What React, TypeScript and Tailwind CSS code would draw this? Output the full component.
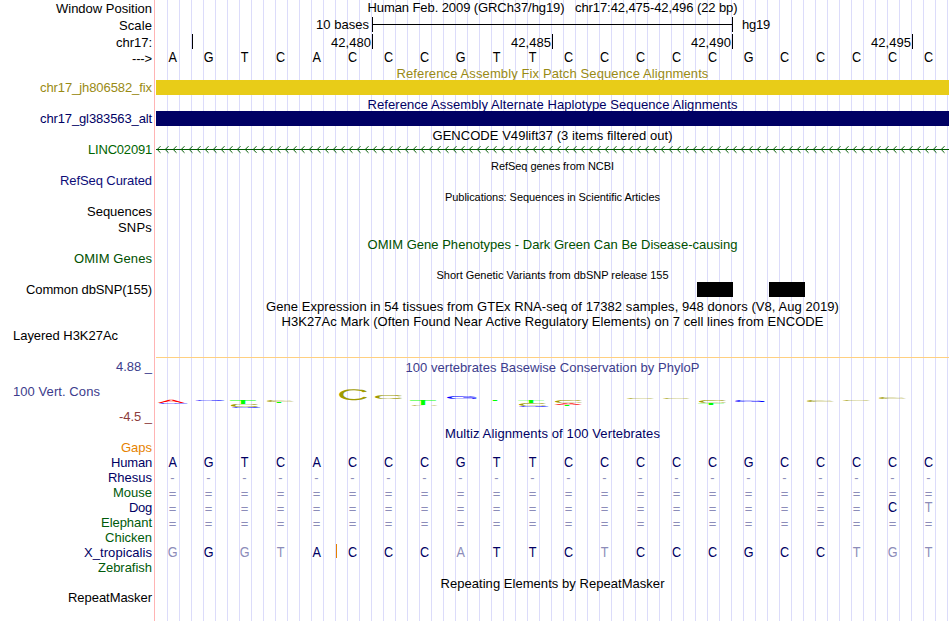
import { useLayoutEffect, useRef, useState } from "react";
import type { ReactNode } from "react";

/** One line of text whose letter spacing is adjusted to fill a given width. */
function Fit({ text, width, className = "" }: { text: string; width: number; className?: string }) {
  const ref = useRef<HTMLSpanElement>(null);
  const [spacing, setSpacing] = useState(0);
  useLayoutEffect(() => {
    if (ref.current) {
      const natural = ref.current.getBoundingClientRect().width;
      setSpacing((s) => s + (width - natural) / text.length);
    }
  }, [text, width]);
  return (
    <span ref={ref} className={`inline-block whitespace-pre ${className}`} style={{ letterSpacing: `${spacing}px` }}>
      {text}
    </span>
  );
}

type LabelRow = { text: string; w: number; h: string; color: string; left?: boolean };

const NAVY = "text-[#000064]";
const GREEN = "text-[#005a0a]";

const labels: LabelRow[] = [
  { text: "Window Position", w: 96, h: "h-[17px]", color: "text-black" },
  { text: "Scale", w: 33, h: "h-[17px]", color: "text-black" },
  { text: "chr17:", w: 36, h: "h-4", color: "text-black" },
  { text: "--->", w: 20, h: "h-[29px]", color: "text-black" },
  { text: "chr17_jh806582_fix", w: 112, h: "h-[31px]", color: "text-[#998a14]" },
  { text: "chr17_gl383563_alt", w: 112, h: "h-[31px]", color: NAVY },
  { text: "LINC02091", w: 64, h: "h-[31px]", color: "text-[#006400]" },
  { text: "RefSeq Curated", w: 92, h: "h-[31px]", color: "text-[#0c0c78]" },
  { text: "Sequences", w: 65, h: "h-4", color: "text-black" },
  { text: "SNPs", w: 34, h: "h-[31px]", color: "text-black" },
  { text: "OMIM Genes", w: 78, h: "h-[31px]", color: "text-[#005000]" },
  { text: "Common dbSNP(155)", w: 126, h: "h-[46px]", color: "text-black" },
  { text: "Layered H3K27Ac", w: 105, h: "h-[31px]", color: "text-black", left: true },
  { text: "4.88 _", w: 36, h: "h-[25px]", color: "text-[#3c3c8c]" },
  { text: "100 Vert. Cons", w: 87, h: "h-[25px]", color: "text-[#3c3c8c]", left: true },
  { text: "-4.5 _", w: 33, h: "h-[31px]", color: "text-[#8c3c3c]" },
  { text: "Gaps", w: 31, h: "h-[15px]", color: "text-[#e68200]" },
  { text: "Human", w: 41, h: "h-[15px]", color: NAVY },
  { text: "Rhesus", w: 44, h: "h-[15px]", color: NAVY },
  { text: "Mouse", w: 39, h: "h-[15px]", color: GREEN },
  { text: "Dog", w: 23, h: "h-[15px]", color: NAVY },
  { text: "Elephant", w: 51, h: "h-[15px]", color: GREEN },
  { text: "Chicken", w: 47, h: "h-[15px]", color: GREEN },
  { text: "X_tropicalis", w: 68, h: "h-[15px]", color: NAVY },
  { text: "Zebrafish", w: 54, h: "h-[30px]", color: GREEN },
  { text: "RepeatMasker", w: 84, h: "h-[15px]", color: "text-black" },
];

function Title({ text, w, className = "" }: { text: string; w: number; className?: string }) {
  return (
    <div className={`flex justify-center ${className}`}>
      <Fit text={text} width={w} />
    </div>
  );
}

/** One character per base; lower-case marks a base that differs from human. */
function Bases({ seq, className = "" }: { seq: string; className?: string }) {
  return (
    <div className={`flex ${className}`}>
      {seq.split("").map((c, i) => {
        const symbol = c === "-" || c === "=";
        const pale = symbol || c !== c.toUpperCase();
        return (
          <span
            key={i}
            className={`w-9 shrink-0 pr-[3px] text-center ${pale ? "text-[#8c8cb9]" : ""} ${
              symbol ? "text-[13px]" : "scale-x-90 text-[14px]"
            } ${c === "=" ? "pt-px" : ""}`}
          >
            {c.toUpperCase()}
          </span>
        );
      })}
    </div>
  );
}

function Tick({ label, w, className }: { label: string; w: number; className: string }) {
  return (
    <div className={`flex h-[15px] shrink-0 justify-end border-r border-black pt-px pr-px ${className}`}>
      {label && <Fit text={label} width={w} />}
    </div>
  );
}

const OLIVE = "#a09b00";
const BLUE = "#0000ff";
const LIME = "#00ff00";
const RED = "#ff0000";

/* Ink extents of each capital in em units: left edge, width. */
const ink: Record<string, [number, number]> = {
  A: [0.002, 0.662],
  C: [0.05, 0.636],
  G: [0.05, 0.666],
  T: [0.022, 0.567],
};

/* letter, left, top, width, height, colour */
const logo: [string, number, number, number, number, string][] = [
  ["A", 157.5, 400, 27, 3.2, RED],
  ["G", 159, 403, 29, 0.9, BLUE],
  ["G", 195.5, 400, 29.5, 1, BLUE],
  ["T", 230, 400, 26, 4, LIME],
  ["C", 231, 404, 27.5, 3.2, OLIVE],
  ["G", 232, 407, 29, 1, BLUE],
  ["C", 267, 400, 27.5, 2, OLIVE],
  ["T", 266, 402, 26, 1, LIME],
  ["C", 339.3, 389, 28, 11, OLIVE],
  ["C", 375, 395, 27.5, 4, OLIVE],
  ["T", 410, 400, 26, 5, LIME],
  ["C", 411, 405, 27, 0.8, OLIVE],
  ["G", 447, 396, 30, 3, BLUE],
  ["T", 482, 400, 26, 1, LIME],
  ["T", 518, 400, 26, 3, LIME],
  ["C", 519, 403, 27.5, 3, OLIVE],
  ["G", 519, 406, 30, 1, BLUE],
  ["C", 555, 400, 27.5, 3, OLIVE],
  ["A", 554, 403, 28, 2, RED],
  ["T", 554, 405, 26, 1, LIME],
  ["C", 627, 398, 27.5, 1, OLIVE],
  ["C", 663, 398, 27, 1, OLIVE],
  ["C", 699, 400, 27.5, 3, OLIVE],
  ["T", 698, 403, 26, 2, LIME],
  ["G", 735, 400, 30, 2, BLUE],
  ["C", 807, 400, 27.5, 2, OLIVE],
  ["C", 843, 400, 27.5, 1, OLIVE],
  ["C", 879, 397, 27.5, 2, OLIVE],
];

function ConservationLogo() {
  return (
    <svg
      className="block h-[51px] w-[793px] shrink-0"
      viewBox="156 375 793 51"
      fontFamily="Liberation Sans, Arial, sans-serif"
      fontSize="100"
      textRendering="geometricPrecision"
    >
      {logo.map(([c, x, y, w, h, fill], i) => {
        const [lsb, em] = ink[c];
        const round = c === "C" || c === "G";
        const sy = h / (round ? 71 : 68.8);
        const sx = w / (em * 100);
        const base = y + h - (round ? sy : 0);
        return (
          <text key={i} fill={fill} transform={`translate(${x - lsb * 100 * sx} ${base}) scale(${sx} ${sy})`}>
            {c}
          </text>
        );
      })}
    </svg>
  );
}

function IntronLine() {
  const tips = Array.from({ length: 99 }, (_, i) => 1.2 + i * 8);
  return (
    <svg className="block h-[15px] w-[793px] shrink-0" viewBox="0 0 793 15" fill="none" stroke="#005a00">
      <path d="M0 7.5H793" />
      <path d={tips.map((x) => `M${x + 3.3} 4.2L${x} 7.5L${x + 3.3} 10.8`).join("")} />
    </svg>
  );
}

function Tracks({ children }: { children: ReactNode }) {
  return (
    <div className="flex w-[793px] shrink-0 flex-col overflow-hidden bg-[repeating-linear-gradient(to_right,transparent_0px,transparent_11px,#dcdcfa_11px,#dcdcfa_12px)]">
      {children}
    </div>
  );
}

export default function App() {
  return (
    <div className="flex h-[621px] w-[950px] overflow-hidden bg-white font-['Liberation_Sans',Arial,sans-serif] text-[13px] leading-[15px] text-black">
      <div className="flex w-[154px] shrink-0 flex-col pt-px">
        {labels.map((l) => (
          <div key={l.text} className={`flex shrink-0 ${l.h} ${l.color} ${l.left ? "pl-[13px]" : "justify-end pr-[2px]"}`}>
            <Fit text={l.text} width={l.w} />
          </div>
        ))}
      </div>
      <div className="mr-px w-px shrink-0 bg-[#ffb4b4]" />
      <Tracks>
        <Title text={"Human Feb. 2009 (GRCh37/hg19)   chr17:42,475-42,496 (22 bp)"} w={370} className="h-[17px]" />
        <div className="flex h-[17px] shrink-0">
          <div className="flex w-[216px] justify-end pr-[3px]">
            <Fit text="10 bases" width={53} />
          </div>
          <div className="h-[15px] w-[361px] border-x border-black">
            <div className="h-2 border-b border-black" />
          </div>
          <div className="pl-[9px]">
            <Fit text="hg19" width={28} />
          </div>
        </div>
        <div className="flex h-[15px] shrink-0">
          <Tick label="" w={0} className="w-[37px]" />
          <Tick label="42,480" w={40} className="w-[180px]" />
          <Tick label="42,485" w={40} className="w-[180px]" />
          <Tick label="42,490" w={40} className="w-[180px]" />
          <Tick label="42,495" w={40} className="w-[180px]" />
        </div>
        <Bases seq="AGTCACCCGTTCCCCCGCCCCC" className="h-[17px] pt-px" />

        <Title text="Reference Assembly Fix Patch Sequence Alignments" w={312} className="h-[14px] text-[#998a14]" />
        <div className="h-[15px] shrink-0 bg-[#e8cc18]" />
        <Title text="Reference Assembly Alternate Haplotype Sequence Alignments" w={370} className={`mt-[2px] h-[14px] ${NAVY}`} />
        <div className="h-[15px] shrink-0 bg-[#000064]" />
        <Title text="GENCODE V49lift37 (3 items filtered out)" w={240} className="mt-[2px] h-[14px]" />
        <IntronLine />

        <Title text="RefSeq genes from NCBI" w={123} className="mt-[2px] h-[31px] text-[11px]" />
        <Title text="Publications: Sequences in Scientific Articles" w={215} className="h-[47px] text-[11px]" />
        <Title text="OMIM Gene Phenotypes - Dark Green Can Be Disease-causing" w={370} className="h-[31px] text-[#005000]" />
        <Title text="Short Genetic Variants from dbSNP release 155" w={232} className="h-[14px] text-[11px]" />
        <div className="flex h-[15px] shrink-0 gap-9 pl-[541px]">
          <div className="w-9 bg-black" />
          <div className="w-9 bg-black" />
        </div>
        <Title
          text="Gene Expression in 54 tissues from GTEx RNA-seq of 17382 samples, 948 donors (V8, Aug 2019)"
          w={573}
          className="mt-[2px] h-[15px]"
        />
        <Title text="H3K27Ac Mark (Often Found Near Active Regulatory Elements) on 7 cell lines from ENCODE" w={542} className="h-[15px]" />
        <div className="mt-7 mb-[2px] h-px shrink-0 bg-[#ffd080]" />
        <Title text="100 vertebrates Basewise Conservation by PhyloP" w={294} className="h-[15px] text-[#3c3c8c]" />
        <ConservationLogo />

        <Title text="Multiz Alignments of 100 Vertebrates" w={215} className={`mb-[14px] h-[15px] ${NAVY}`} />
        <div className={`flex flex-col ${NAVY}`}>
          <Bases seq="AGTCACCCGTTCCCCCGCCCCC" className="h-[15px]" />
          <Bases seq="----------------------" className="h-[15px]" />
          <Bases seq="======================" className="h-[15px]" />
          <Bases seq="====================Ct" className="h-[15px]" />
          <Bases seq="======================" className="h-[15px]" />
          <div className="relative mt-[15px] mb-4 h-[15px]">
            <Bases seq="gGgtACCCaTTCtCCCGCCtgt" className="h-[15px]" />
            <div className="absolute -top-px left-[180px] h-[14px] w-px bg-[#e68200]" />
          </div>
        </div>
        <Title text="Repeating Elements by RepeatMasker" w={224} className="h-[15px]" />
      </Tracks>
    </div>
  );
}
